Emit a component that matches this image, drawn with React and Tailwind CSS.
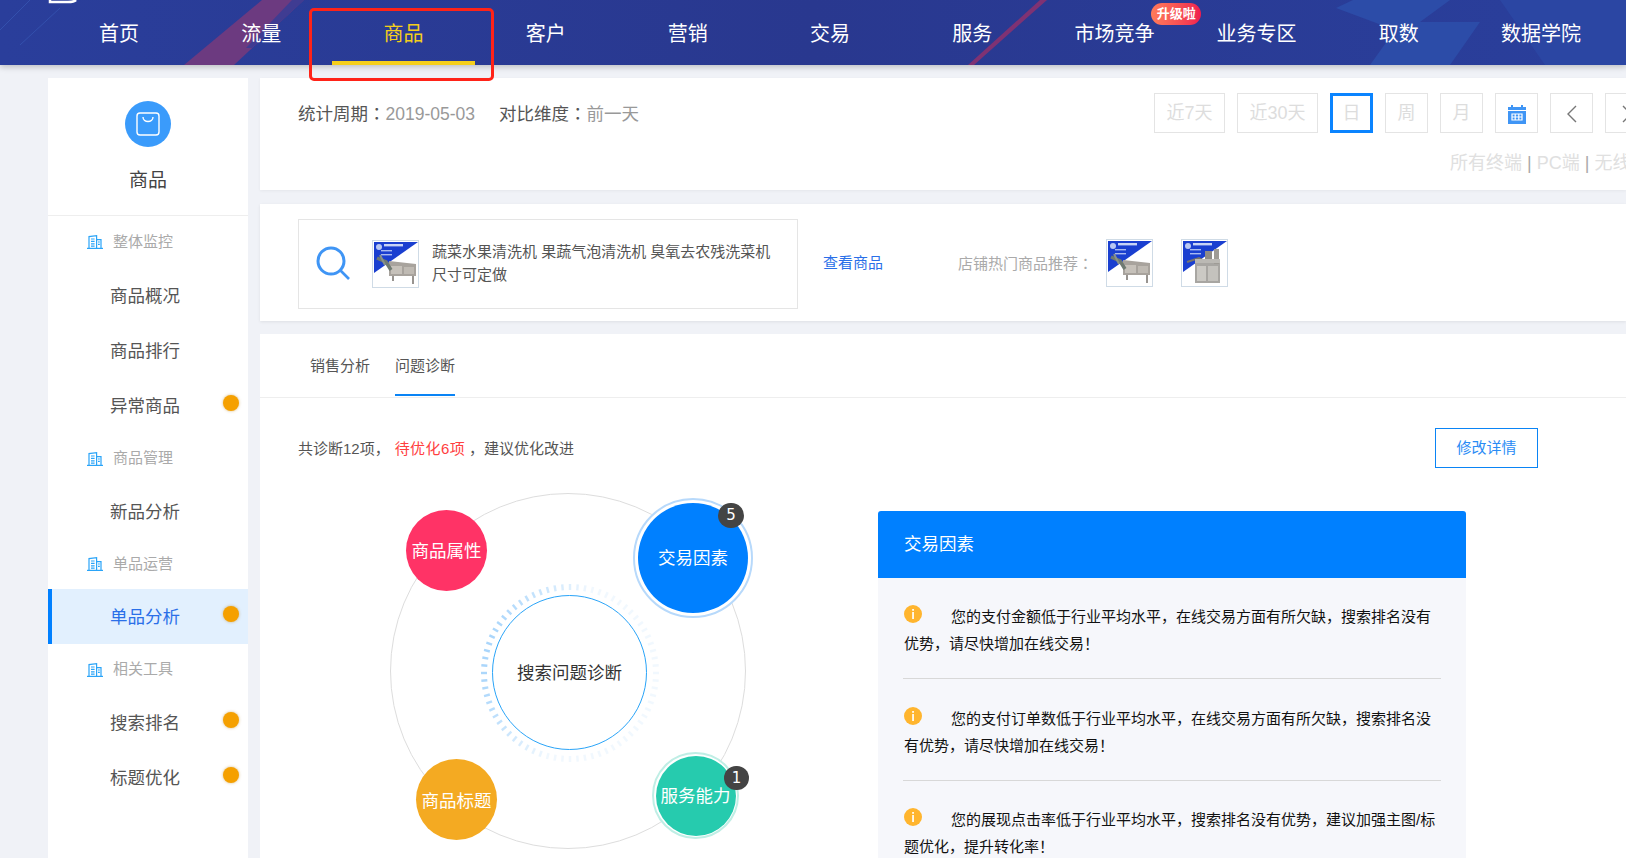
import React from "react";

const navItems = ["首页", "流量", "商品", "客户", "营销", "交易", "服务", "市场竞争", "业务专区", "取数", "数据学院"];

const sideMenu = [
  { group: "整体监控", h: "h-[52px]" },
  { label: "商品概况" },
  { label: "商品排行" },
  { label: "异常商品", dot: true },
  { group: "商品管理", h: "h-[51px]" },
  { label: "新品分析" },
  { group: "单品运营", h: "h-[50px]" },
  { label: "单品分析", dot: true, active: true },
  { group: "相关工具", h: "h-[51px]" },
  { label: "搜索排名", dot: true },
  { label: "标题优化", dot: true },
];

const tips = [
  { text: "您的支付金额低于行业平均水平，在线交易方面有所欠缺，搜索排名没有优势，请尽快增加在线交易！" },
  { text: "您的支付订单数低于行业平均水平，在线交易方面有所欠缺，搜索排名没有优势，请尽快增加在线交易！" },
  { text: "您的展现点击率低于行业平均水平，搜索排名没有优势，建议加强主图/标题优化，提升转化率！" },
];

// colon sits mid-height in the picture, the TC face draws it that way
const Colon = () => <span className="font-['Noto_Sans_CJK_TC',sans-serif]">：</span>;

const BuildingIcon = () => (
  <svg width="16" height="14" viewBox="0 0 16 14" fill="none" stroke="#2aa4f8" strokeWidth="1.2">
    <path d="M2 13.2V1.6L9.6 0.7V13.2" />
    <path d="M9.6 4.6H14V13.2" />
    <path d="M0 13.4H16" />
    <path d="M4 4H7.6M4 6.4H7.6M4 8.8H7.6M4 11.2H7.6M11 7H12.8M11 9.4H12.8" />
  </svg>
);

const Thumb = ({ second }) => (
  <div className="h-[48px] w-[47px] shrink-0 border border-[#cfdbe6] bg-white">
    <svg width="45" height="46" viewBox="0 0 45 46">
      <polygon points="1,1 45,1 1,32" fill="#1a3fd0" />
      <circle cx="6" cy="6" r="3" fill="#b9c8f2" />
      <rect x="11" y="3" width="19" height="2.4" fill="#c8d4f5" />
      <rect x="8" y="9" width="11" height="1.4" fill="#a9baf0" />
      <rect x="8" y="13" width="11" height="1.4" fill="#a9baf0" />
      {second ? (
        <g>
          <rect x="13" y="23" width="25" height="20" fill="#a8a6a2" />
          <rect x="15" y="26" width="9" height="15" fill="#cbc9c4" />
          <rect x="26" y="26" width="10" height="15" fill="#c4c2bd" />
          <path d="M5 22L17 18L24 22" stroke="#77746e" strokeWidth="2" fill="none" />
          <rect x="23" y="11" width="7" height="12" fill="#8f8c86" />
          <rect x="32" y="9" width="5" height="15" fill="#9e9b95" />
          <rect x="13" y="19" width="25" height="4" fill="#bbb9b4" />
        </g>
      ) : (
        <g>
          <path d="M16 20L43 23V35H16Z" fill="#a8a39d" />
          <rect x="18" y="25" width="11" height="8" fill="#c6c1ba" />
          <rect x="31" y="26" width="10" height="7" fill="#bfbab3" />
          <path d="M4 17L13 21L18 29" stroke="#6f7a72" strokeWidth="3.5" fill="none" />
          <path d="M7 14L12 24" stroke="#88928a" strokeWidth="2" />
          <path d="M20 35V40M40 35V43" stroke="#77726c" strokeWidth="1.5" />
        </g>
      )}
    </svg>
  </div>
);

const RangeBtn = ({ children, className = "w-[43px]", active }) => (
  <div
    className={`flex h-[40px] shrink-0 items-center justify-center pt-[1px] text-[18px] text-[#ddd] ${className} ${
      active ? "border-[3px] border-[#0a84ff]" : "border border-[#e4e4e4]"
    }`}
  >
    {children}
  </div>
);

const Badge = ({ value, className }) => (
  <div className={`absolute flex items-center justify-center rounded-full bg-[#444] text-[15px] text-white font-['DejaVu_Sans',sans-serif] ${className}`}>
    {value}
  </div>
);

const Diagram = () => (
  <div className="relative h-[390px] w-[618px] shrink-0">
    <div className="absolute left-[130px] top-[25px] h-[356px] w-[356px] rounded-full border border-[#ddd]" />
    <svg className="absolute left-[218px] top-[113px]" width="184" height="184" viewBox="-92 -92 184 184">
      {Array.from({ length: 72 }).map((_, i) => {
        const a = (i / 72) * Math.PI * 2;
        const c = Math.cos(a - Math.PI * 1.08);
        return (
          <line
            key={i}
            x1={Math.cos(a) * 83}
            y1={Math.sin(a) * 83}
            x2={Math.cos(a) * 89}
            y2={Math.sin(a) * 89}
            stroke="#7cc0fa"
            strokeWidth="2.4"
            opacity={0.1 + 0.55 * Math.max(0, c)}
          />
        );
      })}
    </svg>
    <div className="absolute left-[232px] top-[127px] flex h-[155px] w-[155px] items-center justify-center rounded-full border border-[#2aa4f8] bg-white pt-[2px] text-[17.5px] text-[#333]">
      搜索问题诊断
    </div>
    <div className="absolute left-[146px] top-[42px] flex h-[81px] w-[81px] items-center justify-center rounded-full bg-[#ff3366] pt-[2px] text-[17.5px] text-white">
      商品属性
    </div>
    <div className="absolute left-[373px] top-[30px] flex h-[120px] w-[120px] items-center justify-center rounded-full border-2 border-[#b7d9fb] bg-white">
      <div className="flex h-[110px] w-[110px] items-center justify-center rounded-full bg-[#0080ff] text-[17.5px] text-white">
        交易因素
      </div>
    </div>
    <Badge value="5" className="left-[458px] top-[35px] h-[25px] w-[26px]" />
    <div className="absolute left-[392px] top-[284px] flex h-[87px] w-[87px] items-center justify-center rounded-full border-2 border-[#bfeee5] bg-white">
      <div className="flex h-[80px] w-[80px] items-center justify-center rounded-full bg-[#26cbae] pt-[2px] text-[17.5px] text-white">
        服务能力
      </div>
    </div>
    <Badge value="1" className="left-[464px] top-[298px] h-[24px] w-[25px]" />
    <div className="absolute left-[156px] top-[291px] flex h-[81px] w-[81px] items-center justify-center rounded-full bg-[#f4aa22] pt-[3px] text-[17.5px] text-white">
      商品标题
    </div>
  </div>
);

export default function App() {
  return (
    <div className="relative h-[858px] w-full overflow-hidden bg-[#f0f2f7] font-['Liberation_Sans','Noto_Sans_CJK_SC',sans-serif]">
      {/* top nav */}
      <header className="relative z-10 h-[65px] bg-gradient-to-r from-[#2a3e9b] via-[#29388f] to-[#2a3f9c] shadow-[0_2px_6px_rgba(0,0,0,0.22)]">
        <svg className="absolute inset-0" width="1626" height="65" viewBox="0 0 1626 65">
          <polygon points="184,65 234,65 304,0 262,0" fill="#6c3a80" />
          <polygon points="292,0 304,0 252,48 246,48" fill="#3f3c92" />
          <polygon points="968,65 974,65 1047,0 1040,0" fill="#7f3273" />
          <polygon points="1336,8 1353,0 1450,0 1420,22 1480,22 1450,65 1370,65 1395,30" fill="#2c4ca8" />
          <polygon points="1500,0 1626,0 1626,65 1545,65" fill="#2b46a3" />
          <path d="M0 30L30 0M20 45L60 8" stroke="#3350ad" strokeWidth="1" />
          <path d="M50 0V2H68C72 2 75 1 76 0" stroke="#fff" strokeWidth="2.5" fill="none" />
        </svg>
        <nav className="relative flex h-full pl-[48px]">
          {navItems.map((item) => (
            <a
              key={item}
              className={`relative flex h-full w-[142.2px] items-center justify-center border-b-4 pt-[6px] text-[20px] ${
                item === "商品" ? "border-[#f5cf1b] text-[#f5cf1b]" : "border-transparent text-white"
              }`}
            >
              {item}
              {item === "市场竞争" && (
                <span className="absolute left-[108px] top-[3px] flex h-[22px] w-[50px] items-center justify-center rounded-full bg-gradient-to-r from-[#ff7a5a] to-[#ef1a4f] text-[13px] font-bold">
                  升级啦
                </span>
              )}
            </a>
          ))}
        </nav>
      </header>

      {/* red annotation box */}
      <div className="absolute left-[309px] top-[8px] z-20 h-[73px] w-[185px] rounded-[5px] border-[3px] border-[#ff2318]" />

      <div className="flex gap-3 pl-[48px] pt-[13px]">
        {/* sidebar */}
        <aside className="h-[780px] w-[200px] shrink-0 bg-white">
          <div className="flex h-[138px] flex-col items-center border-b border-[#eee] pt-[23px]">
            <div className="flex h-[46px] w-[46px] items-center justify-center rounded-full bg-[#3a9bfb]">
              <svg width="26" height="26" viewBox="0 0 26 26" fill="none" stroke="#fff" strokeWidth="1.4">
                <rect x="2" y="2" width="22" height="22" rx="3" />
                <path d="M8 6C8 12 18 12 18 6" />
              </svg>
            </div>
            <div className="mt-[21px] text-[19px] leading-[26px] text-[#444]">商品</div>
          </div>
          {sideMenu.map((m) =>
            m.group ? (
              <div key={m.group} className={`flex items-center pl-[39px] ${m.h}`}>
                <BuildingIcon />
                <span className="ml-[10px] text-[15px] text-[#aaa]">{m.group}</span>
              </div>
            ) : (
              <div
                key={m.label}
                className={`relative flex h-[55px] items-center pt-[2px] text-[17.5px] ${
                  m.active ? "border-l-4 border-[#0080ff] bg-[#e2f0fe] pl-[58px] text-[#2a6fe8]" : "pl-[62px] text-[#555]"
                }`}
              >
                {m.label}
                {m.dot && (
                  <span className="absolute right-[9px] top-[17px] h-[16px] w-[16px] rounded-full bg-[#f5a000] shadow-[0_0_3px_rgba(180,120,0,0.5)]" />
                )}
              </div>
            )
          )}
        </aside>

        <main className="min-w-0 flex-1">
          {/* period bar */}
          <section className="h-[112px] overflow-hidden bg-white pt-[15px] shadow-[0_1px_3px_rgba(0,0,0,0.05)]">
            <div className="flex items-center">
              <div className="w-[894px] shrink-0 pl-[38px] pt-[2px] text-[17.5px] text-[#555]">
                统计周期<Colon /><span className="text-[#999]">2019-05-03</span>
                <span className="ml-[24px]">对比维度<Colon /></span>
                <span className="text-[#999]">前一天</span>
              </div>
              <div className="flex gap-3">
                <RangeBtn className="w-[71px]">近7天</RangeBtn>
                <RangeBtn className="w-[81px]">近30天</RangeBtn>
                <RangeBtn active>日</RangeBtn>
                <RangeBtn>周</RangeBtn>
                <RangeBtn>月</RangeBtn>
                <RangeBtn>
                  <svg width="20" height="20" viewBox="0 0 20 20">
                    <path d="M1 3H4V1H6V3H14V1H16V3H19V20H1Z" fill="#3f95f5" />
                    <rect x="1" y="6" width="18" height="1" fill="#fff" />
                    <path d="M5 10H15V16H5ZM8.2 10V16M11.8 10V16M5 13H15" stroke="#fff" strokeWidth="1.2" fill="none" />
                  </svg>
                </RangeBtn>
                <RangeBtn>
                  <svg width="12" height="20" viewBox="0 0 12 20" fill="none" stroke="#777" strokeWidth="1.4">
                    <path d="M10 2L2 10L10 18" />
                  </svg>
                </RangeBtn>
                <RangeBtn>
                  <svg width="12" height="20" viewBox="0 0 12 20" fill="none" stroke="#777" strokeWidth="1.4">
                    <path d="M2 2L10 10L2 18" />
                  </svg>
                </RangeBtn>
              </div>
            </div>
            <div className="mt-[18px] whitespace-nowrap pl-[1190px] text-[18px] leading-[24px] text-[#e0e0e0]">
              所有终端 <span className="text-[#aaa]">|</span> PC端 <span className="text-[#aaa]">|</span> 无线端
            </div>
          </section>

          {/* current goods */}
          <section className="mt-[14px] flex h-[117px] items-center bg-white pl-[38px] shadow-[0_1px_3px_rgba(0,0,0,0.08)]">
            <div className="mt-[15px] flex h-[90px] w-[500px] shrink-0 items-center self-start border border-[#e5e5e5] pl-[17px]">
              <svg className="-mt-[2px]" width="34" height="34" viewBox="0 0 34 34" fill="none" stroke="#3f95f5" strokeWidth="3">
                <circle cx="15" cy="15" r="13" />
                <path d="M24.5 24.5L33 33" strokeWidth="2.6" />
              </svg>
              <div className="-mt-[1px] ml-[22px]">
                <Thumb />
              </div>
              <p className="-mt-[2px] ml-[13px] w-[345px] text-[15px] leading-[23px] text-[#555]">
                蔬菜水果清洗机 果蔬气泡清洗机 臭氧去农残洗菜机 尺寸可定做
              </p>
            </div>
            <a className="ml-[25px] pt-[2px] text-[15px] text-[#2a6fe8]">查看商品</a>
            <span className="ml-[75px] pt-[2px] text-[15px] text-[#aaa]">
              店铺热门商品推荐<Colon />
            </span>
            <div className="ml-[13px] flex gap-[28px]">
              <Thumb />
              <Thumb second />
            </div>
          </section>

          {/* diagnosis */}
          <section className="mt-[13px] h-[524px] bg-white">
            <div className="flex h-[64px] gap-[25px] border-b border-[#eee] pl-[50px] text-[15px] text-[#555]">
              <div className="flex items-center pt-[2px]">销售分析</div>
              <div className="relative flex items-center pt-[2px]">
                问题诊断
                <span className="absolute bottom-[1px] left-0 h-[2px] w-full bg-[#0a84f5]" />
              </div>
            </div>
            <div className="mt-[30px] flex h-[40px] items-center justify-between pl-[38px] pr-[88px] text-[15px] text-[#555]">
              <div className="pt-[2px]">
                共诊断12项，
                <span className="ml-[5px] tracking-[0.4px] text-[#ff4040]">待优化6项</span>
                <span className="ml-[4px]">，建议优化改进</span>
              </div>
              <button className="h-[40px] w-[103px] border border-[#0a84f5] text-[15px] text-[#2a8cf5]">修改详情</button>
            </div>
            <div className="flex">
              <Diagram />
              <div className="mt-[43px] h-[347px] w-[588px] shrink-0">
                <div className="flex h-[67px] items-center rounded-t-[3px] bg-[#0080ff] pl-[26px] text-[17.5px] text-white">
                  交易因素
                </div>
                <div className="h-[280px] bg-[#f6f7fb] px-[25px]">
                  {tips.map((t, i) => (
                    <div
                      key={i}
                      className={`pb-[21px] pl-[1px] text-[15px] leading-[27px] text-[#111] ${
                        i === 1 ? "pt-[26px]" : "pt-[25px]"
                      } ${i < 2 ? "border-b border-[#d8d8d8]" : ""}`}
                    >
                      <svg className="mr-[29px] inline-block align-[-1px]" width="18" height="18" viewBox="0 0 18 18">
                        <circle cx="9" cy="9" r="9" fill="#ffb52e" />
                        <rect x="8.2" y="4" width="1.7" height="1.8" fill="#fff" />
                        <rect x="8.2" y="7" width="1.7" height="7" fill="#fff" />
                      </svg>
                      {t.text}
                    </div>
                  ))}
                </div>
              </div>
            </div>
          </section>
        </main>
      </div>
    </div>
  );
}
